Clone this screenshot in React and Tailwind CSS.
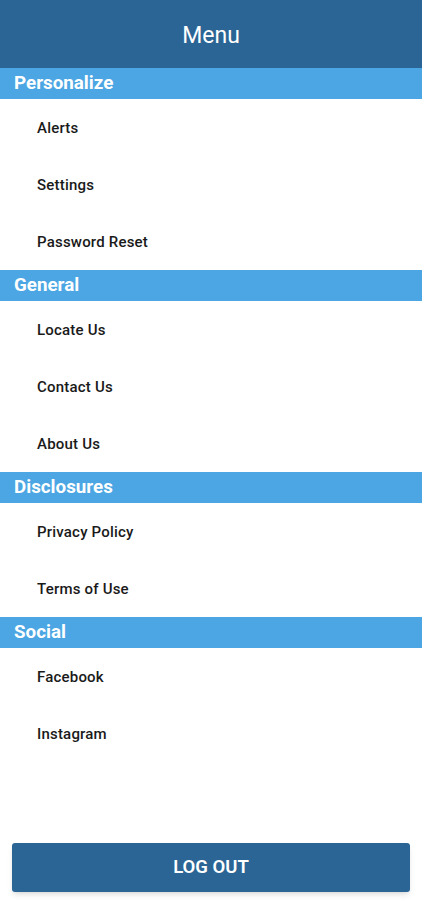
import React from "react";

const sections = [
  { title: "Personalize", items: ["Alerts", "Settings", "Password Reset"] },
  { title: "General", items: ["Locate Us", "Contact Us", "About Us"] },
  { title: "Disclosures", items: ["Privacy Policy", "Terms of Use"] },
  { title: "Social", items: ["Facebook", "Instagram"] },
];

export default function App() {
  return (
    <div
      className="w-[422px] h-[900px] bg-white flex flex-col"
      style={{ fontFamily: "Roboto, 'Liberation Sans', sans-serif" }}
    >
      {/* Header */}
      <div className="h-[68px] bg-[#2a6595] flex items-center justify-center pt-[4px] shrink-0">
        <h1 className="text-[23px] text-white font-normal">Menu</h1>
      </div>

      {/* Menu sections */}
      <div className="flex flex-col">
        {sections.map((section) => (
          <div key={section.title}>
            <div className="h-[31px] bg-[#4ba6e3] flex items-center pl-[14px]">
              <span className="text-[18.8px] font-bold text-white">{section.title}</span>
            </div>
            {section.items.map((item) => (
              <button
                key={item}
                className="w-full h-[57px] flex items-center pl-[37px] pt-[2px] text-left"
              >
                <span className="text-[15px] font-medium tracking-[0.2px] text-[#1a1a1a]">{item}</span>
              </button>
            ))}
          </div>
        ))}
      </div>

      {/* Logout */}
      <div className="mt-auto px-[12px] pb-[8px]">
        <button className="w-[398px] h-[49px] bg-[#2a6595] rounded-[3px] shadow-md flex items-center justify-center">
          <span className="text-[18.5px] font-semibold text-white">LOG OUT</span>
        </button>
      </div>
    </div>
  );
}
